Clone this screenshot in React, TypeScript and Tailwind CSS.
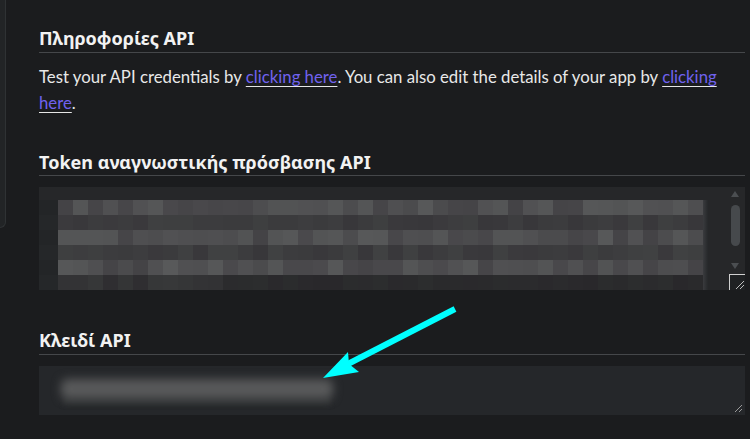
import React from "react";

function shade(r: number, c: number): string {
  const x = Math.sin(r * 127.1 + c * 311.7) * 43758.5453;
  const f = x - Math.floor(x);
  const light = r % 2 === 0;
  let base: number;
  let range: number;
  if (r === 5) {
    base = c < 11 ? 46 : 41;
    range = c < 11 ? 9 : 3;
  } else if (light) {
    base = 68;
    range = 20;
  } else {
    base = 56;
    range = 8;
  }
  const v = Math.round(base + f * range);
  const g = Math.round(v + (f - 0.5) * 3);
  return `rgb(${v},${g},${v + 2})`;
}

const ROWS = 6;
const COLS = 43;

function Pixelated() {
  return (
    <div className="flex flex-col">
      {Array.from({ length: ROWS }).map((_, r) => (
        <div key={r} className="flex">
          <div
            className="w-[19px] h-[15px]"
            style={{ backgroundColor: r % 2 === 0 ? "#232527" : "#252729" }}
          />
          {Array.from({ length: COLS }).map((_, c) => (
            <div
              key={c}
              className="w-[15px] h-[15px]"
              style={{ backgroundColor: shade(r, c) }}
            />
          ))}
          <div className="w-[5px] h-[15px] bg-gradient-to-r from-[#3a3b3e] to-[#26282a]" />
        </div>
      ))}
    </div>
  );
}

export default function App() {
  return (
    <div className="relative w-[750px] h-[439px] bg-[#1b1c1e] flex overflow-hidden font-['Lato','Noto_Sans',sans-serif]">
      <div className="shrink-0 w-[6px] h-[228px] bg-[#222426] border-r border-b border-[#2f3234] rounded-br-[6px]" />
      <div className="ml-[33px] w-[706px] shrink-0">
        <h2 className="mt-[26px] h-[24px] leading-[24px] text-[18px] font-bold text-[#f2f2f2] font-['Noto_Sans',sans-serif] pb-[2px] box-content border-b border-[#45474a]">
          Πληροφορίες API
        </h2>
        <p className="mt-[11px] text-[16.75px] leading-[26px] text-[#e8e8e8]">
          Test your API credentials by{" "}
          <a className="text-[#7062ee] underline decoration-[#e6e6e6] underline-offset-[3px] cursor-pointer">
            clicking here
          </a>
          . You can also edit the details of your app by{" "}
          <a className="text-[#7062ee] underline decoration-[#e6e6e6] underline-offset-[3px] cursor-pointer">
            clicking here
          </a>
          .
        </p>

        <h2 className="mt-[34px] h-[24px] leading-[24px] text-[18px] font-bold text-[#f2f2f2] font-['Noto_Sans',sans-serif] pb-[1px] box-content border-b border-[#45474a]">
          Token αναγνωστικής πρόσβασης API
        </h2>
        <div className="relative mt-[11px] h-[103px] bg-[#262729] overflow-hidden">
          <div className="pt-[13px]">
            <Pixelated />
          </div>
          <div className="absolute right-[4px] top-[4px] w-[12px] flex flex-col items-center">
            <div className="w-0 h-0 border-l-[4px] border-r-[4px] border-b-[6px] border-l-transparent border-r-transparent border-b-[#4b4e51]" />
            <div className="mt-[8px] w-[9px] h-[41px] rounded-full bg-[#46494c]" />
            <div className="mt-[17px] w-0 h-0 border-l-[4px] border-r-[4px] border-t-[6px] border-l-transparent border-r-transparent border-t-[#4b4e51]" />
          </div>
          <div className="absolute right-0 bottom-0 w-[16px] h-[16px] border-l border-t border-[#d0d0d0] bg-[#1f2123]">
            <svg width="16" height="16" className="absolute left-0 top-0">
              <line x1="6" y1="14" x2="14" y2="6" stroke="#bdbdbd" strokeWidth="1" />
              <line x1="10" y1="14" x2="14" y2="10" stroke="#bdbdbd" strokeWidth="1" />
            </svg>
          </div>
        </div>

        <h2 className="mt-[38px] h-[24px] leading-[24px] text-[18px] font-bold text-[#f2f2f2] font-['Noto_Sans',sans-serif] pb-[2px] box-content border-b border-[#45474a]">
          Κλειδί API
        </h2>
        <div className="relative mt-[11px] h-[49px] bg-[#25272a] overflow-hidden">
          <div className="absolute left-[24px] top-[31px] w-[268px] h-[8px] bg-[#2e3032] blur-[2px]" />
          <div className="absolute left-[22px] top-[13px] w-[272px] h-[20px] rounded-[6px] bg-[#58595a] blur-[5px]" />
          <svg width="10" height="10" className="absolute right-[2px] bottom-[2px]">
            <line x1="2" y1="9" x2="9" y2="2" stroke="#9a9a9a" strokeWidth="1" />
            <line x1="6" y1="9" x2="9" y2="6" stroke="#9a9a9a" strokeWidth="1" />
          </svg>
        </div>
      </div>

      <svg
        className="absolute left-0 top-0 pointer-events-none"
        width="750"
        height="439"
        viewBox="0 0 750 439"
      >
        <line x1="455" y1="309" x2="344" y2="366" stroke="#00ffff" strokeWidth="6" />
        <polygon points="323,378 348,352 349,364 359,372" fill="#00ffff" />
      </svg>
    </div>
  );
}
